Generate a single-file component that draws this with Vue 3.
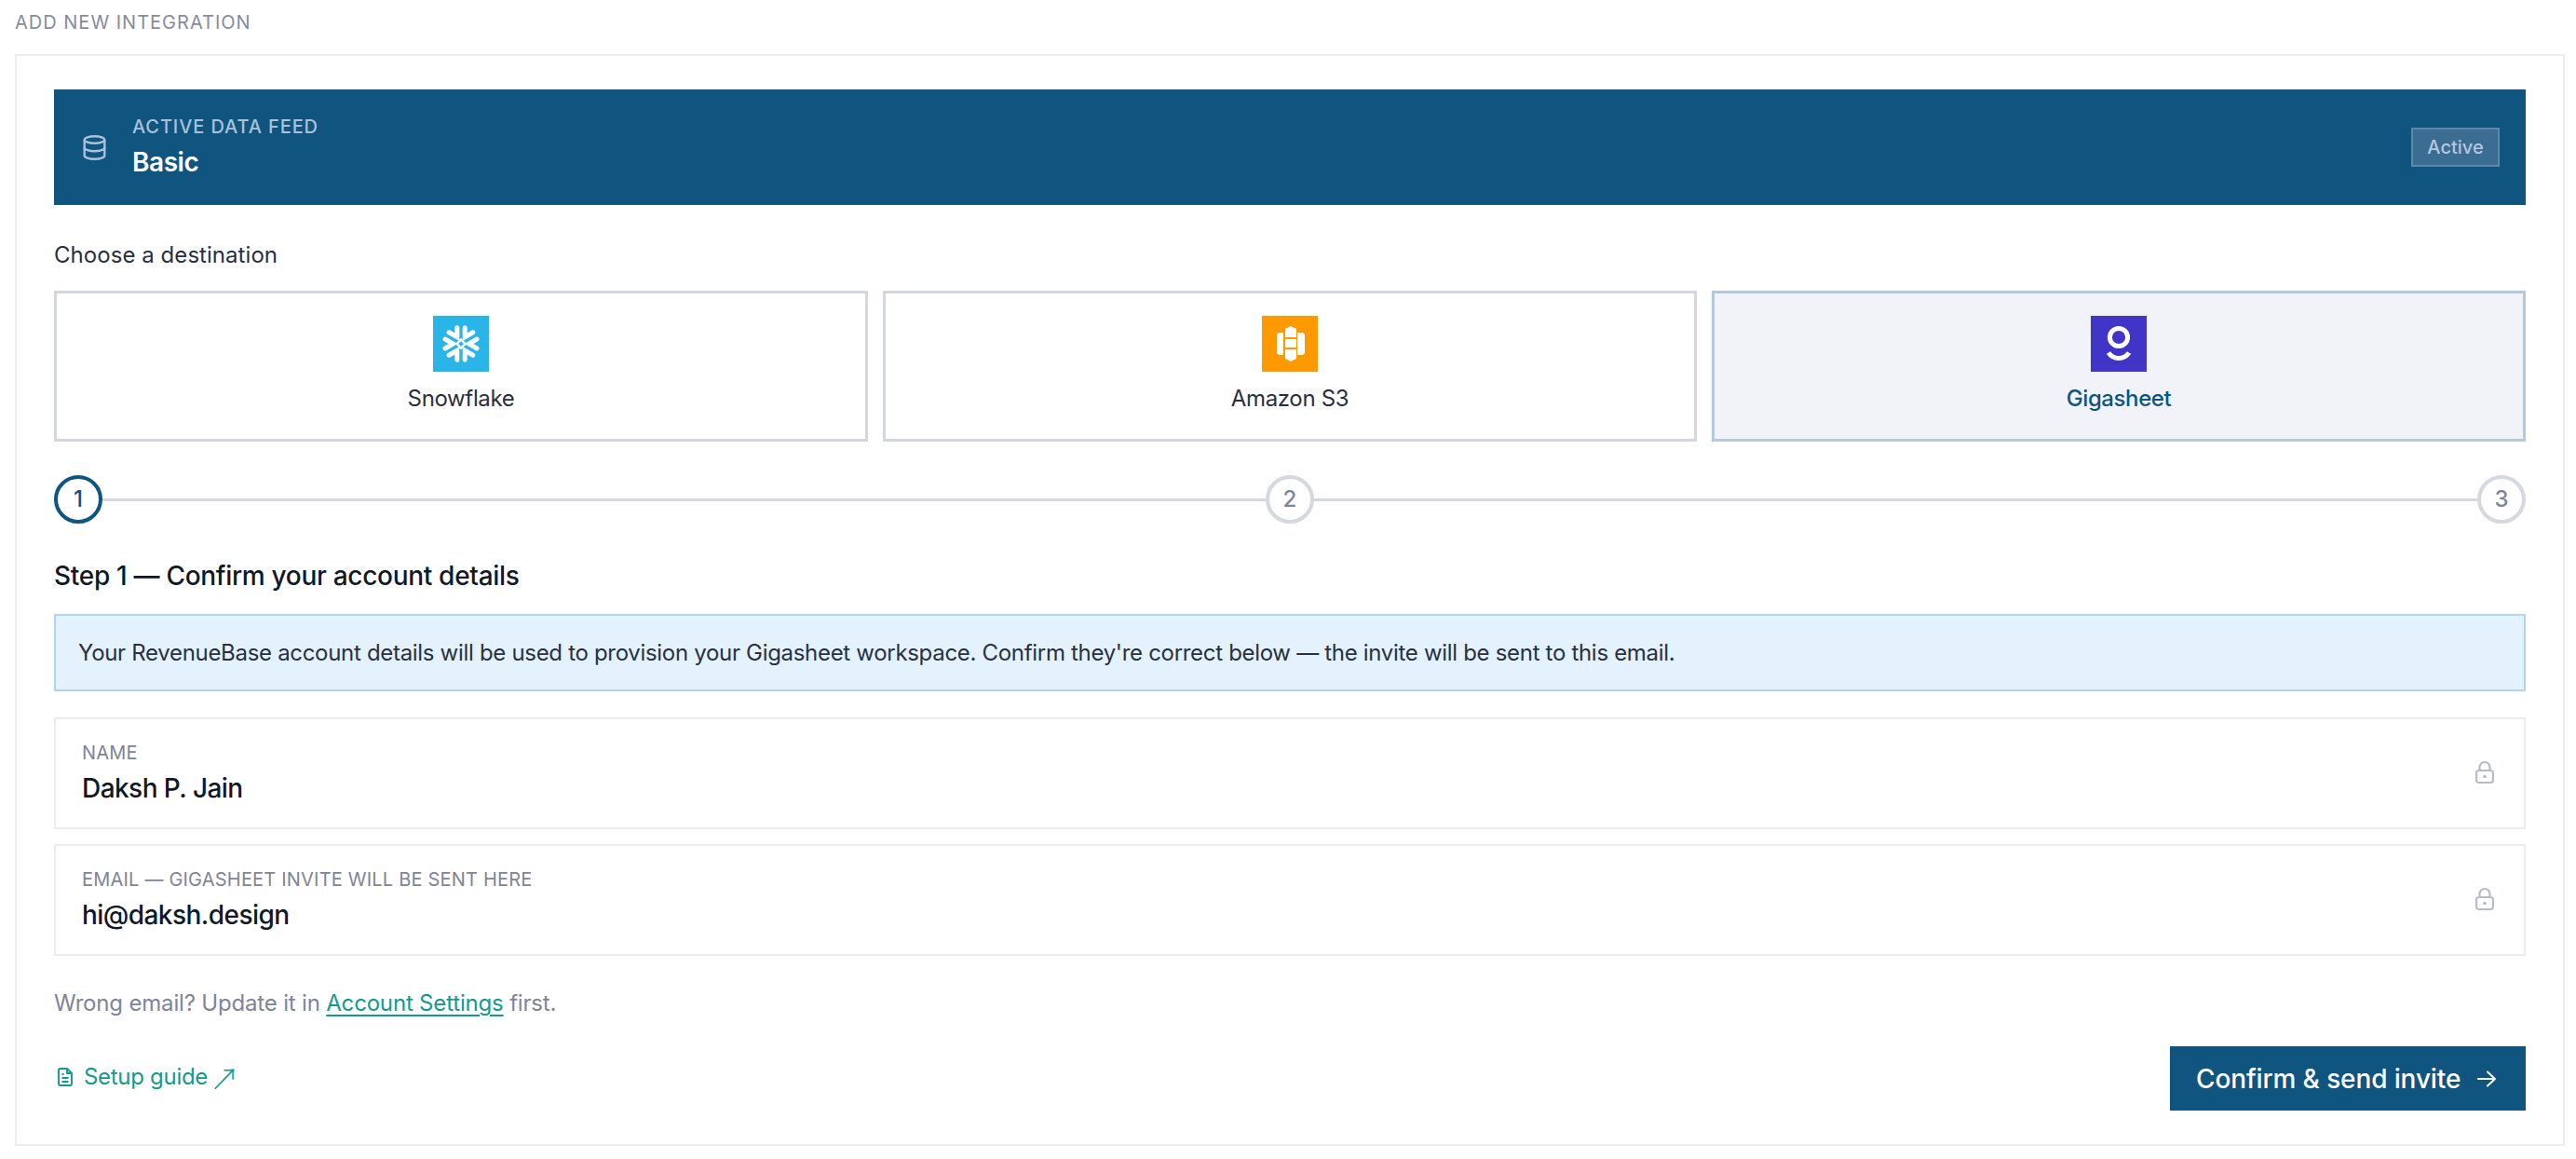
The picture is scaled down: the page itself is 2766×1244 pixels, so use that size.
<template>
  <div class="page">
    <h2 class="title">ADD NEW INTEGRATION</h2>
    <section class="panel">
      <div class="feed">
        <svg class="db" viewBox="0 0 25 27" fill="none" stroke="currentColor" stroke-width="2.4">
          <ellipse cx="12.5" cy="5" rx="10.8" ry="3.8" />
          <path d="M1.7 5v17c0 2.1 4.8 3.800 10.800 3.800s10.800-1.700 10.800-3.800V5" />
          <path d="M1.700 13.500c0 2.100 4.800 3.800 10.800 3.800s10.800-1.700 10.800-3.800" />
        </svg>
        <div class="feed-text">
          <div class="feed-label">ACTIVE DATA FEED</div>
          <div class="feed-name">Basic</div>
        </div>
        <span class="badge">Active</span>
      </div>

      <div class="choose">Choose a destination</div>
      <div class="cards">
        <button class="card">
          <svg class="logo" viewBox="0 0 60 60">
            <rect width="60" height="60" fill="#29b5e8" />
            <g fill="none" stroke="#fff" stroke-width="5" stroke-linecap="round" stroke-linejoin="miter">
              <path v-for="a in [0, 60, 120, 180, 240, 300]" :key="a" d="M13 25 21.500 30 13 35" :transform="`rotate(${a} 30 30)`" />
              <path d="M30 25.500 34.500 30 30 34.500 25.500 30Z" stroke-width="2.400" />
            </g>
          </svg>
          <span>Snowflake</span>
        </button>
        <button class="card">
          <svg class="logo" viewBox="0 0 60 60">
            <rect width="60" height="60" fill="#ff9900" />
            <g fill="#fff">
              <path d="M18 18h5v24h-5l-2-2V20Z" />
              <path d="M38 18h6l2 2v20l-2 2h-6Z" />
              <path d="M25 14l6-3 6 3v9H25Z" />
              <rect x="25" y="25" width="12" height="9" />
              <path d="M25 36h12v10l-6 3-6-3Z" />
            </g>
          </svg>
          <span>Amazon S3</span>
        </button>
        <button class="card selected">
          <svg class="logo" viewBox="0 0 60 60">
            <rect width="60" height="60" fill="#4035c6" />
            <circle cx="30" cy="23" r="9.600" fill="none" stroke="#fff" stroke-width="5" />
            <path d="M19 39.500c5 8 17 8 22 0" fill="none" stroke="#fff" stroke-width="5" />
          </svg>
          <span>Gigasheet</span>
        </button>
      </div>

      <div class="stepper">
        <span class="step current">1</span>
        <span class="rail"></span>
        <span class="step">2</span>
        <span class="rail"></span>
        <span class="step">3</span>
      </div>

      <h3 class="step-title">Step 1 — Confirm your account details</h3>
      <div class="info">Your RevenueBase account details will be used to provision your Gigasheet workspace. Confirm they're correct below — the invite will be sent to this email.</div>

      <div class="fields">
        <div v-for="f in fields" :key="f.label" class="field">
          <div>
            <div class="field-label">{{ f.label }}</div>
            <div class="field-value">{{ f.value }}</div>
          </div>
          <svg class="lock" viewBox="0 0 20 24" fill="none" stroke="currentColor" stroke-width="2.2">
            <rect x="1.100" y="10" width="17.800" height="13" rx="2.500" />
            <path d="M4.500 10V6.500a5.500 5.500 0 0 1 11 0V10" />
            <circle cx="10" cy="16.500" r="1.800" fill="currentColor" stroke="none" />
          </svg>
        </div>
      </div>

      <p class="note">Wrong email? Update it in <a class="note-link">Account Settings</a> first.</p>

      <div class="actions">
        <a class="guide">
          <svg class="doc" viewBox="0 0 16 20" fill="none" stroke="currentColor" stroke-width="1.900" stroke-linejoin="round">
            <path d="M2.500 1h7.500l5 5v11.500a1.500 1.500 0 0 1-1.500 1.500h-11A1.500 1.500 0 0 1 1 17.500V2.500A1.500 1.500 0 0 1 2.500 1Z" />
            <path d="M10 1v5h5M4.500 7h2M4.500 11h7M4.500 15h7" />
          </svg>
          <span>Setup guide</span>
          <span class="ext">↗</span>
        </a>
        <button class="confirm">
          <span>Confirm &amp; send invite</span>
          <svg class="arrow" viewBox="0 0 20 20" fill="none" stroke="#fff" stroke-width="2" stroke-linecap="round" stroke-linejoin="round">
            <path d="M1 10h18M11 2.500 19 10l-8 7.500" />
          </svg>
        </button>
      </div>
    </section>
  </div>
</template>

<script setup>
const fields = [
  { label: 'NAME', value: 'Daksh P. Jain' },
  { label: 'EMAIL — GIGASHEET INVITE WILL BE SENT HERE', value: 'hi@daksh.design' },
]
</script>

<style>
html, body { margin: 0; background: #fff; }
</style>

<style scoped>
.page {
  box-sizing: border-box;
  width: 2766px;
  height: 1244px;
  padding: 0 12px 0 16px;
  font-family: Inter, "Liberation Sans", sans-serif;
  color: #1f2433;
  background: #fff;
  overflow: hidden;
}
.title {
  margin: 0;
  height: 58px;
  padding-top: 11px;
  box-sizing: border-box;
  font-size: 20px;
  line-height: 26px;
  font-weight: 400;
  letter-spacing: 1px;
  color: #878c9f;
}
.panel {
  box-sizing: border-box;
  height: 1172px;
  border: 2px solid #ecedf2;
  padding: 36px 40px 0;
}
.feed {
  display: flex;
  align-items: center;
  height: 124px;
  padding: 0 28px 0 31px;
  background: #105480;
  color: #fff;
}
.db { width: 25px; height: 27px; color: #a9c1d9; margin-right: 28px; }
.feed-text { flex: 1; }
.feed-label { font-size: 20px; line-height: 26px; font-weight: 500; letter-spacing: 0.9px; color: #a9c1d9; margin-top: -2px; }
.feed-name { font-size: 28px; line-height: 36px; font-weight: 600; margin-top: 7px; letter-spacing: -0.45px; }
.badge {
  box-sizing: border-box;
  width: 95px;
  height: 42px;
  display: flex;
  align-items: center;
  justify-content: center;
  border: 2px solid #5f88a8;
  background: #3b6c92;
  color: #b4c8de;
  font-size: 20px;
  font-weight: 500;
}
.choose { margin-top: 39px; font-size: 24px; line-height: 30px; font-weight: 400; color: #2a2f3f; letter-spacing: 0.05px; margin-bottom: 23px; }
.cards { display: grid; grid-template-columns: repeat(3, 1fr); gap: 16px; }
.card {
  box-sizing: border-box;
  height: 162px;
  border: 3px solid #d3d6dd;
  background: #fff;
  padding: 24px 0 0;
  display: flex;
  flex-direction: column;
  align-items: center;
  font: inherit;
  font-size: 24px;
  line-height: 30px;
  color: #2a2f3f;
  letter-spacing: -0.35px;
}
.card span { margin-top: 14px; }
.card.selected { background: #f1f3f9; border-color: #b4c8e0; color: #105480; font-weight: 500; letter-spacing: -0.4px; }
.logo { width: 60px; height: 60px; display: block; }
.stepper { display: flex; align-items: center; margin-top: 36px; }
.step {
  box-sizing: border-box;
  flex: none;
  width: 52px;
  height: 52px;
  padding-bottom: 2px;
  border-radius: 50%;
  border: 4px solid #d5d8de;
  display: flex;
  align-items: center;
  justify-content: center;
  font-size: 24px;
  font-weight: 500;
  color: #7f8499;
}
.step.current { border-color: #105480; color: #105480; }
.rail { flex: 1; height: 3px; background: #d5d8de; }
.step-title { margin: 38px 0 0; font-size: 28px; line-height: 36px; font-weight: 500; color: #111827; letter-spacing: -0.3px; }
.info {
  box-sizing: border-box;
  margin-top: 23px;
  height: 83px;
  display: flex;
  align-items: center;
  padding: 0 24px;
  background: #e3f2fc;
  border: 2px solid #b0d6ee;
  font-size: 24px;
  color: #2a3040;
  letter-spacing: -0.31px;
  white-space: nowrap;
}
.fields { display: flex; flex-direction: column; gap: 16px; margin-top: 28px; }
.field {
  box-sizing: border-box;
  height: 120px;
  border: 2px solid #ecedf2;
  padding: 0 32px 0 28px;
  display: flex;
  align-items: center;
  justify-content: space-between;
}
.field-label { font-size: 20px; line-height: 26px; color: #7f8499; letter-spacing: 0.2px; margin-top: -2px; }
.field-value { font-size: 28px; line-height: 36px; font-weight: 500; color: #111827; margin-top: 7px; letter-spacing: -0.55px; }
.lock { width: 20px; height: 24px; color: #b8bcca; margin-top: -2px; }
.note { margin: 35px 0 0; font-size: 24px; line-height: 32px; color: #7f8499; letter-spacing: -0.18px; }
.note-link { color: #139a8e; text-decoration: underline; text-decoration-thickness: 2px; text-underline-offset: 4px; }
.actions { display: flex; align-items: center; justify-content: space-between; margin-top: 30px; }
.guide { display: flex; align-items: center; color: #139a8e; font-size: 24px; letter-spacing: -0.3px; margin-left: 4px; margin-top: -4px; }
.doc { width: 16px; height: 20px; margin-right: 12px; }
.ext { font-family: "Noto Sans CJK SC", sans-serif; font-weight: 300; font-size: 32px; line-height: 30px; margin-left: 2px; }
.confirm {
  box-sizing: border-box;
  width: 382px;
  height: 69px;
  border: 0;
  background: #105480;
  color: #fff;
  display: flex;
  align-items: center;
  padding: 0 32px 0 28px;
  justify-content: space-between;
  font: inherit;
  font-size: 28px;
  font-weight: 500;
  letter-spacing: -0.12px;
}
.arrow { width: 20px; height: 20px; }
</style>
